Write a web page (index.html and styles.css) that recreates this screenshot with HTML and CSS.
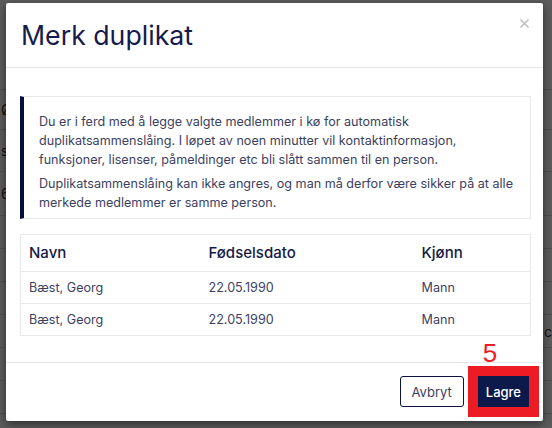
FILE: index.html
```html
<!DOCTYPE html>
<html lang="no">
<head>
<meta charset="utf-8">
<title>Merk duplikat</title>
<link rel="stylesheet" href="styles.css">
</head>
<body>
<div class="page">
  <div class="page-head"></div>
  <div class="page-row r40"><span>Ø</span></div>
  <div class="page-row r42"><span>s</span></div>
  <div class="page-row r44"><span>6</span></div>
  <div class="page-row r33"></div>
  <div class="page-row r33"></div>
  <div class="page-row r33"></div>
  <div class="page-row r33"><span class="right-text">c</span></div>
  <div class="page-row r33"></div>
  <div class="page-row r33"></div>
</div>
<div class="backdrop"></div>
<div class="modal">
  <div class="modal-header">
    <h2 class="title">Merk duplikat</h2>
    <button class="close" aria-label="Lukk">
      <svg width="9" height="9" viewBox="0 0 9 9"><path d="M0.5 0.5 L8.5 8.5 M8.5 0.5 L0.5 8.5" stroke="#c4c4c4" stroke-width="1.6" fill="none"/></svg>
    </button>
  </div>
  <div class="modal-body">
    <div class="info">
      <p>Du er i ferd med å legge valgte medlemmer i kø for automatisk duplikatsammenslåing. I løpet av noen minutter vil kontaktinformasjon, funksjoner, lisenser, påmeldinger etc bli slått sammen til en person.</p>
      <p>Duplikatsammenslåing kan ikke angres, og man må derfor være sikker på at alle merkede medlemmer er samme person.</p>
    </div>
    <table class="grid">
      <thead>
        <tr><th class="c-name">Navn</th><th class="c-date">Fødselsdato</th><th>Kjønn</th></tr>
      </thead>
      <tbody>
        <tr><td>Bæst, Georg</td><td>22.05.1990</td><td>Mann</td></tr>
        <tr><td>Bæst, Georg</td><td>22.05.1990</td><td>Mann</td></tr>
      </tbody>
    </table>
  </div>
  <div class="modal-footer">
    <button class="btn btn-outline">Avbryt</button>
    <span class="mark">
      <span class="mark-num">5</span>
      <button class="btn btn-primary">Lagre</button>
    </span>
  </div>
</div>
</body>
</html>
```
FILE: styles.css
```css
* { box-sizing: border-box; }
html, body { margin: 0; }
body {
  width: 552px;
  height: 428px;
  overflow: hidden;
  position: relative;
  background: #fff;
  font-family: Inter, "Noto Sans", sans-serif;
}

/* underlying page */
.page { width: 552px; }
.page-head { height: 90px; border-bottom: 1px solid #d8d8d8; }
.page-row {
  border-bottom: 1px solid #d8d8d8;
  display: flex;
  align-items: center;
  padding-left: 1px;
  font-size: 14px;
  color: #333;
}
.r40 { height: 40px; }
.r42 { height: 42px; }
.r44 { height: 44px; }
.r33 { height: 33px; }
.right-text { margin-left: auto; width: 8px; }

.backdrop {
  position: absolute;
  inset: 0;
  background: rgba(0, 0, 0, 0.64);
}

/* modal */
.modal {
  position: absolute;
  left: 6px;
  top: 3px;
  width: 537px;
  height: 418px;
  background: #fff;
  border-radius: 2px;
  box-shadow: 0 3px 10px rgba(0, 0, 0, 0.5);
  display: flex;
  flex-direction: column;
}
.modal-header {
  height: 65px;
  border-bottom: 1px solid #e6e6e6;
  display: flex;
  align-items: center;
  padding: 0 14px 0 15px;
}
.title {
  margin: 0;
  font-size: 26.7px;
  font-weight: 400;
  line-height: 34px;
  color: #161b4b;
}
.close {
  margin-left: auto;
  align-self: flex-start;
  margin-top: 16px;
  padding: 0;
  border: 0;
  background: none;
  width: 9px;
  height: 9px;
  display: flex;
}

.modal-body {
  flex: 1;
  padding: 28px 12px 0 14px;
}
.info {
  border: 1px solid #e8e8e8;
  border-left: 4px solid #0a0d3b;
  padding: 15px 15px 1px 15px;
  margin-bottom: 15px;
}
.info p {
  margin: 0 0 5px;
  font-size: 12.6px;
  line-height: 19px;
  color: #3c3f60;
}

.grid {
  width: 100%;
  border-collapse: collapse;
  border: 1px solid #e8e8e8;
}
.grid th {
  text-align: left;
  font-size: 15px;
  font-weight: 500;
  color: #151a45;
  line-height: 18px;
  padding: 9px 8px;
  border-bottom: 1px solid #e8e8e8;
}
.grid td {
  font-size: 12.6px;
  line-height: 17px;
  color: #3c3f60;
  padding: 7px 8px;
  border-bottom: 1px solid #e8e8e8;
}
.c-name { width: 180px; }
.c-date { width: 213px; }

.modal-footer {
  border-top: 1px solid #e6e6e6;
  padding: 13px 14px 14px;
  display: flex;
  justify-content: flex-end;
  gap: 14px;
}
.btn {
  height: 31px;
  font-family: Inter, "Noto Sans", sans-serif;
  font-size: 13px;
  border-radius: 3px;
  cursor: pointer;
}
.btn-outline {
  background: #fff;
  border: 1px solid #0b1240;
  color: #3c3f60;
  padding: 0 11px;
}
.btn-primary {
  background: #0c1a4b;
  border: 1px solid #0c1a4b;
  color: #fff;
  font-weight: 500;
  padding: 0 7px;
  border-radius: 0;
  outline: 10px solid #ed1c24;
}
.mark {
  position: relative;
  display: flex;
}
.mark-num {
  position: absolute;
  left: 5px;
  top: -36px;
  font-family: "Liberation Sans", sans-serif;
  font-size: 26px;
  line-height: 26px;
  color: #ed1c24;
}
```
